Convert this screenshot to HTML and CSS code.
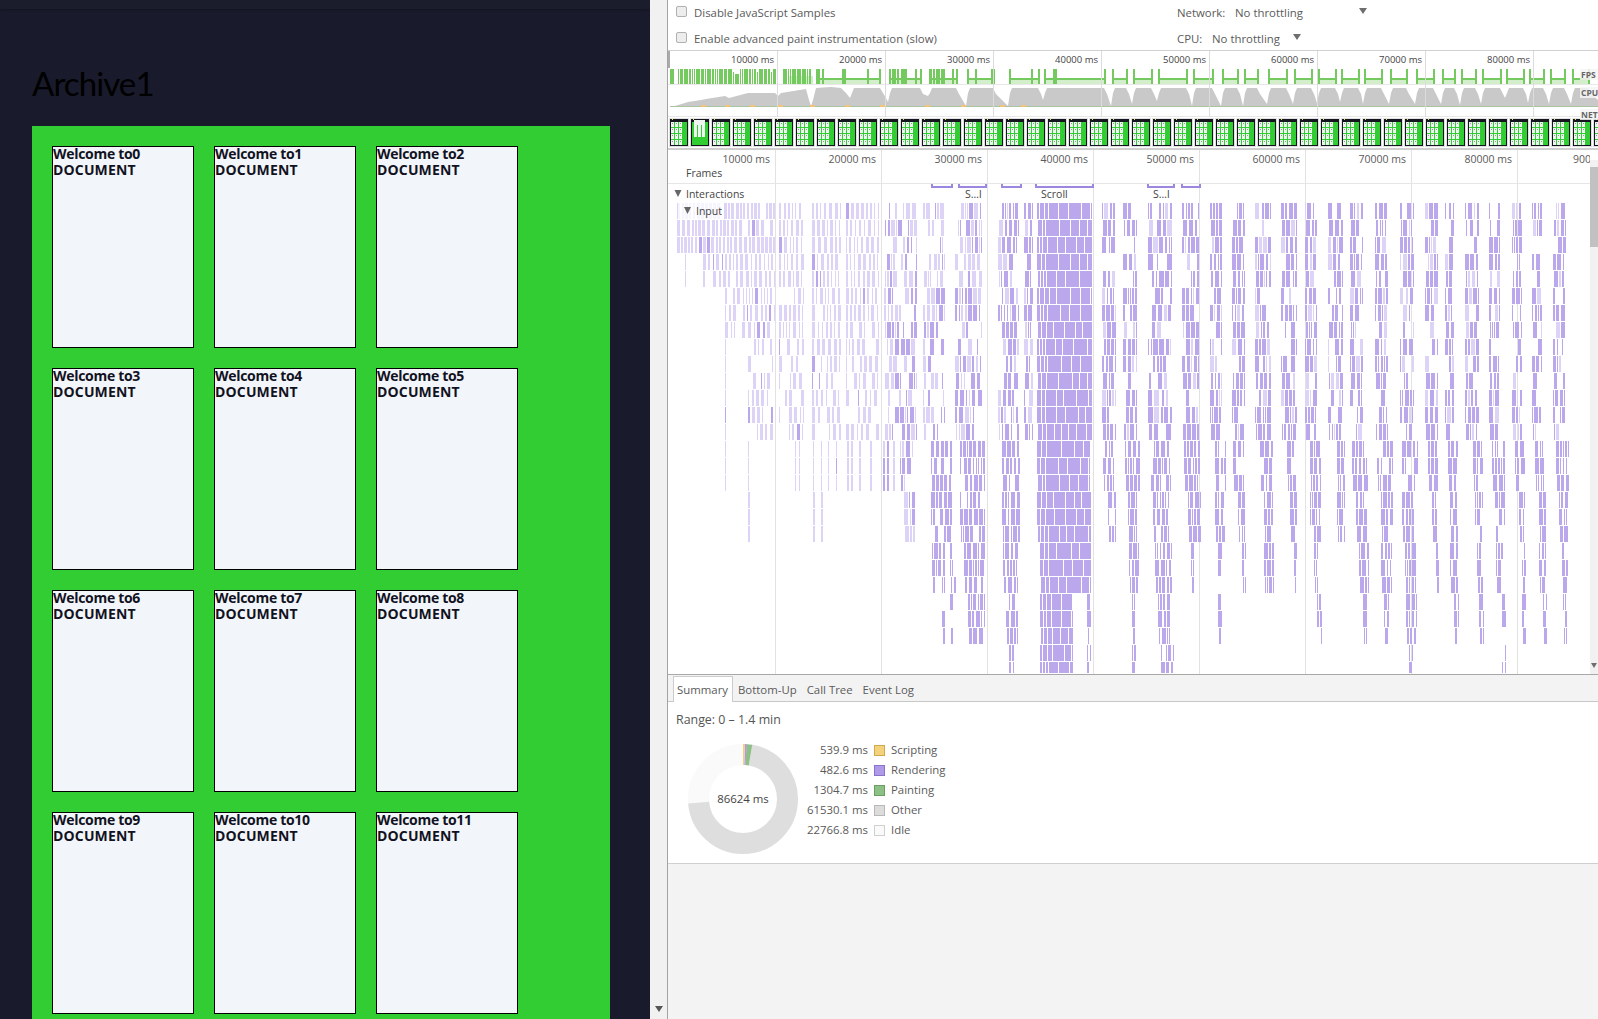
FILE: index.html
```html
<!DOCTYPE html>
<html lang="en">
<head>
<meta charset="utf-8">
<title>Archive1 – Performance</title>
<link rel="stylesheet" href="styles.css">
</head>
<body>
<div class="screen">
  <main class="page">
    <div class="topbar"></div>
    <h1 class="title">Archive1</h1>
    <section class="panel">
      <article class="card"><b>Welcome to0</b><b>DOCUMENT</b></article>
      <article class="card"><b>Welcome to1</b><b>DOCUMENT</b></article>
      <article class="card"><b>Welcome to2</b><b>DOCUMENT</b></article>
      <article class="card"><b>Welcome to3</b><b>DOCUMENT</b></article>
      <article class="card"><b>Welcome to4</b><b>DOCUMENT</b></article>
      <article class="card"><b>Welcome to5</b><b>DOCUMENT</b></article>
      <article class="card"><b>Welcome to6</b><b>DOCUMENT</b></article>
      <article class="card"><b>Welcome to7</b><b>DOCUMENT</b></article>
      <article class="card"><b>Welcome to8</b><b>DOCUMENT</b></article>
      <article class="card"><b>Welcome to9</b><b>DOCUMENT</b></article>
      <article class="card"><b>Welcome to10</b><b>DOCUMENT</b></article>
      <article class="card"><b>Welcome to11</b><b>DOCUMENT</b></article>
    </section>
  </main>
  <div class="page-scrollbar"><span class="tri tri-dark"></span></div>
  <section class="devtools">
    <header class="toolbar">
      <div class="tool-row">
        <label class="check-label"><span class="checkbox"></span>Disable JavaScript Samples</label>
        <div class="throttle"><span class="throttle-name net-name">Network:</span><span class="net-value">No throttling</span><span class="tri"></span></div>
      </div>
      <div class="tool-row">
        <label class="check-label"><span class="checkbox"></span>Enable advanced paint instrumentation (slow)</label>
        <div class="throttle"><span class="throttle-name cpu-name">CPU:</span><span class="cpu-value">No throttling</span><span class="tri"></span></div>
      </div>
    </header>
    <svg id="overview" class="overview" viewBox="668 51 930 99" width="930" height="99" xmlns="http://www.w3.org/2000/svg"></svg>
    <div class="main-chart">
      <svg id="flame" class="flame" viewBox="668 150 922 524" width="922" height="524" xmlns="http://www.w3.org/2000/svg"></svg>
      <div class="chart-scrollbar"><div class="chart-thumb"></div><span class="tri tri-small"></span></div>
    </div>
    <nav class="tabs">
      <span class="tab tab-active">Summary</span>
      <span class="tab">Bottom-Up</span>
      <span class="tab">Call Tree</span>
      <span class="tab">Event Log</span>
    </nav>
    <section class="summary">
      <div class="range">Range: 0 – 1.4 min</div>
      <div class="summary-body">
        <div class="pie">
          <svg viewBox="0 0 110 110" width="110" height="110" xmlns="http://www.w3.org/2000/svg">
            <g class="pie-ring" fill="none" stroke-width="21">
              <circle class="pie-idle" cx="55" cy="55" r="44.5"/>
              <circle class="pie-other" cx="55" cy="55" r="44.5" pathLength="100" stroke-dasharray="71 100" stroke-dashoffset="-2.7"/>
              <circle class="pie-paint" cx="55" cy="55" r="44.5" pathLength="100" stroke-dasharray="1.6 100" stroke-dashoffset="-1.1"/>
              <circle class="pie-render" cx="55" cy="55" r="44.5" pathLength="100" stroke-dasharray="0.6 100" stroke-dashoffset="-0.6"/>
              <circle class="pie-script" cx="55" cy="55" r="44.5" pathLength="100" stroke-dasharray="0.6 100"/>
            </g>
          </svg>
          <span class="pie-total">86624 ms</span>
        </div>
        <ul class="legend">
          <li><span class="legend-value">539.9 ms</span><span class="swatch sw-script"></span>Scripting</li>
          <li><span class="legend-value">482.6 ms</span><span class="swatch sw-render"></span>Rendering</li>
          <li><span class="legend-value">1304.7 ms</span><span class="swatch sw-paint"></span>Painting</li>
          <li><span class="legend-value">61530.1 ms</span><span class="swatch sw-other"></span>Other</li>
          <li><span class="legend-value">22766.8 ms</span><span class="swatch sw-idle"></span>Idle</li>
        </ul>
      </div>
    </section>
    <div class="devtools-rest"></div>
  </section>
</div>
<script src="app.js"></script>
</body>
</html>
```
FILE: styles.css
```css
* { box-sizing: border-box; }
html, body { margin: 0; height: 100%; overflow: hidden; }
.screen { display: flex; width: 1598px; height: 1019px; overflow: hidden; }

/* page under inspection */
.page { width: 650px; flex: none; height: 1019px; background: #191a2b; overflow: hidden; }
.topbar { height: 9px; background: #1b1c2c; box-shadow: 0 1px 3px rgba(0,0,0,.25); }
.title { margin: 0; padding: 52px 0 0 32px; height: 117px; font: 400 33px/44px Lato, sans-serif; color: #000; letter-spacing: -0.9px; }
.panel { margin-left: 32px; width: 578px; padding: 20px; background: #32cd32; display: grid; grid-template-columns: repeat(3, 142px); grid-auto-rows: 202px; gap: 20px; height: 900px; overflow: hidden; }
.card { background: #f2f6fa; border: 1px solid #000; padding: 0; margin: 0; font: 14px/16px "Open Sans", sans-serif; color: #12121f; }
.card b { display: block; font-weight: 700; margin-top: -1px; margin-bottom: 1px; }
.card b:first-child { letter-spacing: -0.3px; }
.card b:last-child { letter-spacing: 0.15px; }

.page-scrollbar { width: 18px; flex: none; background: #f1f1f1; border-right: 1px solid #a3a3a3; display: flex; align-items: flex-end; justify-content: center; padding: 0 0 7px; }

/* devtools */
.devtools { flex: 1; min-width: 0; display: flex; flex-direction: column; background: #f3f3f3; font: 11.4px/14px "Open Sans", sans-serif; color: #5a5a5a; }
.toolbar { height: 51px; background: #fff; border-bottom: 1px solid #d0d0d0; padding-left: 8px; flex: none; }
.tool-row { height: 25px; display: flex; align-items: center; }
.tool-row + .tool-row { padding-top: 2px; }
.check-label { width: 501px; display: flex; align-items: center; gap: 7px; flex: none; }
.checkbox { width: 11px; height: 11px; border: 1px solid #b0b0b0; border-radius: 2px; background: #ededed; margin-top: -2px; }
.throttle { display: flex; align-items: center; }
.net-name { width: 58px; }
.net-value { width: 124px; }
.cpu-name { width: 35px; }
.cpu-value { width: 81px; }
.tri { display: block; width: 0; height: 0; border-style: solid; border-width: 6px 4px 0; border-color: #6e6e6e transparent transparent; margin-top: -4px; }
.tri-dark { border-color: #555 transparent transparent; margin: 0; }
.tri-small { border-width: 5px 3.5px 0; margin: 0; }

.overview { display: block; flex: none; background: #fff; }
.main-chart { display: flex; height: 525px; flex: none; background: #fff; border-bottom: 1px solid #a8a8a8; border-top: 0; }
.flame { display: block; flex: none; }
.chart-scrollbar { flex: 1; margin-top: 10px; background: #f1f1f1; display: flex; flex-direction: column; align-items: center; justify-content: space-between; padding: 7px 0 6px; }
.chart-thumb { width: 100%; height: 80px; background: #c1c1c1; }
.axis-label { font: 9.5px "Open Sans", sans-serif; fill: #444; text-anchor: end; }
.time-label { font: 10.5px "Open Sans", sans-serif; fill: #5a5a5a; text-anchor: end; }
.track-label { font: 10.5px "Open Sans", sans-serif; fill: #444; }
.side-label { font: 700 8.5px "Open Sans", sans-serif; fill: #666; }

.tabs { height: 27px; flex: none; display: flex; align-items: flex-end; padding-left: 5px; gap: 0; background: #f3f3f3; border-bottom: 1px solid #c8c8c8; }
.tab { height: 25px; padding: 7px 5px 0; }
.tab-active { background: #fff; border: 1px solid #ccc; border-bottom: 0; padding: 6px 3px 0; width: 60px; margin-bottom: -1px; height: 26px; }

.summary { height: 162px; flex: none; background: #fff; border-bottom: 1px solid #cfcfcf; padding: 11px 8px 0; }
.range { font-size: 12.4px; line-height: 14px; color: #555; }
.summary-body { display: flex; margin-top: 17px; }
.pie { position: relative; width: 110px; height: 110px; margin: 0 0 0 12px; flex: none; }
.pie svg { display: block; }
.pie-ring circle { transform: rotate(-90deg); transform-origin: 55px 55px; }
.pie-idle { stroke: #fafafa; }
.pie-other { stroke: #dedede; }
.pie-paint { stroke: #8cc084; }
.pie-render { stroke: #ae9ae8; }
.pie-script { stroke: #f2d27a; }
.pie-total { position: absolute; inset: 0; display: flex; align-items: center; justify-content: center; color: #444; }
.legend { list-style: none; margin: -4px 0 0; padding: 0; width: 200px; }
.legend li { display: flex; align-items: center; height: 20px; white-space: nowrap; }
.legend-value { width: 70px; text-align: right; margin-right: 6px; }
.swatch { width: 11px; height: 11px; margin-right: 6px; border: 1px solid; flex: none; }
.sw-script { background: #f4d27c; border-color: #cfa84f; }
.sw-render { background: #ae9ae8; border-color: #8a74c9; }
.sw-paint { background: #8cc084; border-color: #6a9e62; }
.sw-other { background: #dcdcdc; border-color: #b8b8b8; }
.sw-idle { background: #fafafa; border-color: #d0d0d0; }
.devtools-rest { flex: 1; background: #f3f3f3; }
```
FILE: app.js
```js
(function () {
  var NS = 'http://www.w3.org/2000/svg';
  var seed = 7331;
  function rnd() {
    seed = (seed + 0x6D2B79F5) | 0;
    var t = Math.imul(seed ^ (seed >>> 15), 1 | seed);
    t = (t + Math.imul(t ^ (t >>> 7), 61 | t)) ^ t;
    return ((t ^ (t >>> 14)) >>> 0) / 4294967296;
  }
  function el(parent, name, attrs, text) {
    var n = document.createElementNS(NS, name);
    for (var k in attrs) n.setAttribute(k, attrs[k]);
    if (text) n.textContent = text;
    parent.appendChild(n);
    return n;
  }
  function rectD(x, y, w, h) { return 'M' + x + ' ' + y + 'h' + w + 'v' + h + 'h' + (-w) + 'z'; }

  /* ---------- overview ---------- */
  var ov = document.getElementById('overview');
  var light = '', green = '', line = '';
  var segs = [[816,881],[889,922],[929,958],[967,995],[1009,1040],[1044,1106],[1112,1128],[1133,1153],[1158,1188],[1193,1214],[1222,1239],[1244,1259],[1268,1288],[1294,1313],[1318,1337],[1341,1360],[1364,1383],[1390,1408],[1416,1435],[1442,1456],[1461,1477],[1482,1502],[1506,1525],[1529,1545],[1550,1566],[1572,1590]];
  var x = 670;
  while (x < 812) {
    var w = 1 + Math.floor(rnd() * 4);
    if (x < 678 && x > 671) { x = 678; }
    if (x > 776 && x < 782) { x = 783; }
    var top = rnd() < 0.2 ? 72 + Math.floor(rnd() * 4) : 69;
    green += rectD(x, top, w, 85 - top);
    if (x > 783) light += rectD(x, 76, w + 2, 9);
    x += w + 1;
  }
  segs.forEach(function (s) {
    light += rectD(s[0], 79, s[1] - s[0], 6);
    line += rectD(s[0], 78, s[1] - s[0], 2);
    green += rectD(s[0], 69, 2, 16) + rectD(s[1] - 2, 69, 2, 16);
    var spikes = s[0] < 960 ? 8 : s[0] < 1050 ? 3 : 0;
    for (var i = 0; i < spikes; i++) {
      var px = s[0] + Math.floor(rnd() * (s[1] - s[0]));
      green += rectD(px, 69, 2, 16);
    }
  });
  el(ov, 'rect', { x: 668, y: 51, width: 2, height: 17, fill: '#aaa' });
  el(ov, 'path', { d: light, fill: '#d2eeca', 'shape-rendering': 'crispEdges' });
  el(ov, 'path', { d: line + green, fill: '#74c95f', 'shape-rendering': 'crispEdges' });

  var cpu = 'M675 106L688 102L701 100L706 99L725 96L729 98L748 93L775 93L778 96L781 93L806 89L809 100L811 106L813 100L816 88L831 87L841 88L846 93L850 98L854 88L880 88L886 98L889 104';
  var dips = [102, 96, 106, 106, 100, 106, 104, 101, 106, 106, 106, 104, 104, 103, 102, 104, 104, 104, 104, 105, 104, 98, 103, 104, 104];
  segs.slice(1).forEach(function (s, i) {
    cpu += 'L' + (s[0] - 1) + ' ' + dips[i] + 'L' + (s[0] + 1) + ' 93L' + (s[0] + 3) + ' 88L' + (s[1] - 2) + ' 88L' + (s[1] + 1) + ' 94';
  });
  cpu += 'L1598 100V106H675Z';
  el(ov, 'path', { d: cpu, fill: '#c9c9c9' });
  el(ov, 'rect', { x: 670, y: 106, width: 928, height: 1, fill: '#a9c4a0' });
  [701, 725, 750, 778, 810, 845, 880, 925, 961, 1000, 1021].forEach(function (ox) {
    el(ov, 'rect', { x: ox, y: 105, width: 5, height: 2, fill: '#f3c37a' });
  });
  el(ov, 'rect', { x: 668, y: 84, width: 930, height: 1, fill: '#e8e8e8' });
  el(ov, 'rect', { x: 668, y: 116, width: 930, height: 1, fill: '#e8e8e8' });
  for (var g = 0; g < 8; g++) {
    var gx = 777 + 108 * g;
    el(ov, 'rect', { x: gx, y: 51, width: 1, height: 66, fill: '#dcdcdc' });
    el(ov, 'text', { x: gx - 3, y: 63, class: 'axis-label' }, (g + 1) * 10000 + ' ms');
  }
  /* film strip */
  for (var k = 0; k < 45; k++) {
    var fx = 670 + 21 * k, odd = k === 1;
    el(ov, 'rect', { x: fx - 1, y: 118, width: 20, height: 29, fill: '#e2e2e2' });
    el(ov, 'rect', { x: fx, y: 119, width: 18, height: 27, fill: '#15151f' });
    el(ov, 'rect', { x: fx + 1, y: 122, width: 16, height: 23, fill: '#32cd32' });
    if (odd) {
      [3, 7, 11].forEach(function (c) { el(ov, 'rect', { x: fx + c, y: 120, width: 3, height: 17, fill: '#eef4f0' }); });
      el(ov, 'rect', { x: fx + 3, y: 120, width: 11, height: 5, fill: '#eef4f0' });
    } else {
      [1, 5, 9].forEach(function (c) {
        [122, 128, 134, 140].forEach(function (r) {
          el(ov, 'rect', { x: fx + c, y: r, width: 3, height: 5, fill: '#eef4f0' });
          el(ov, 'rect', { x: fx + c + 1, y: r + 1, width: 1, height: 1, fill: '#999' });
        });
      });
    }
    el(ov, 'rect', { x: fx + 2, y: 119, width: 1, height: 1, fill: '#f5e050' });
  }
  el(ov, 'rect', { x: 668, y: 148, width: 930, height: 2, fill: '#cfcfcf' });

  /* ---------- flame chart ---------- */
  var fl = document.getElementById('flame');
  var T0 = [[677,775],[779,804],[812,841],[846,879],[884,917],[923,945],[955,982],[998,1019],[1024,1033],[1037,1092,13],[1102,1116],[1123,1137],[1148,1172,5],[1182,1199],[1210,1222],[1232,1245],[1255,1271],[1281,1297],[1305,1317],[1328,1343],[1350,1363],[1375,1388],[1400,1414],[1425,1438],[1445,1454],[1465,1479],[1489,1500],[1512,1522],[1532,1542],[1553,1566]];
  var T1 = [[900,913],[931,952],[960,985],[1002,1020],[1037,1090,14],[1103,1114],[1125,1140],[1150,1171],[1184,1200],[1215,1226],[1233,1244],[1260,1274],[1287,1296],[1310,1321],[1337,1345],[1352,1368],[1377,1393],[1402,1418,5],[1428,1438],[1448,1458],[1473,1483],[1492,1505],[1515,1525],[1535,1546],[1556,1569]];
  var T2 = [[904,915],[931,952],[960,985],[1002,1020],[1037,1091,14],[1108,1116],[1128,1137],[1153,1169],[1188,1201],[1215,1225],[1238,1245],[1264,1273],[1290,1297],[1310,1321],[1337,1345],[1356,1367],[1381,1393],[1402,1414],[1432,1438],[1450,1458],[1475,1483],[1495,1506],[1519,1526],[1539,1546],[1559,1568]];
  var T3 = [[932,945],[950,957],[964,985],[1003,1018],[1040,1091,14],[1129,1139],[1155,1172],[1191,1194],[1218,1222],[1242,1246],[1264,1274],[1294,1297],[1314,1318],[1359,1369],[1381,1392],[1405,1416],[1436,1439],[1450,1458],[1477,1483],[1496,1503],[1522,1526],[1539,1546],[1562,1568]];
  var T4 = [[942,945],[950,953],[968,985],[1006,1018],[1040,1073,12],[1087,1091],[1132,1135],[1158,1170],[1218,1222],[1317,1322],[1363,1367],[1384,1389],[1406,1417],[1454,1459],[1479,1484],[1502,1506],[1522,1526],[1543,1547],[1563,1567]];
  var T5 = [[1009,1014],[1040,1073,12],[1087,1091],[1132,1136],[1161,1174],[1409,1413],[1502,1506]];
  var tiers = [[0,13,T0],[14,16,T1],[17,19,T2],[20,22,T3],[23,25,T4],[26,27,T5]];
  var pale = '', dark = '';

  function bar(px, row, w, solid) {
    var y = 203 + 17 * row, h = row === 27 ? 11 : 16;
    var d = rectD(px, y, w, h);
    var p = px < 880 ? 0.05 : px < 1000 ? (row < 5 ? 0.3 : 0.5) : (row < 14 ? 0.82 : 0.95);
    if (row >= 14 && px >= 930) p = 1;
    if (solid || rnd() < p) dark += d; else pale += d;
  }
  function fill(cl, row) {
    var x0 = cl[0], x1 = cl[1], maxW = cl[2] || 4;
    var big = maxW > 6, early = x0 < 776;
    var px = x0 + (row % 3 === 1 && x0 > 880 ? 1 : 0);
    while (px < x1) {
      var w = 1 + Math.floor(rnd() * maxW);
      if (big) {
        /* the big scroll burst: thin bars at its left edge, wide blocks after */
        w = px - x0 < 9 ? 2 + Math.floor(rnd() * 3) : 6 + Math.floor(rnd() * (maxW - 5));
      } else if (early && row < 3) {
        w = 2 + Math.floor(rnd() * 2);
      } else if (px < 880) {
        w = 1 + Math.floor(rnd() * 3);
      }
      if (px + w > x1) w = x1 - px;
      var skip = 0;
      if (px < 880) skip = row < 5 ? 0.03 : row < 8 ? 0.14 : 0.32;
      else if (px < 1000) skip = row < 14 ? 0.3 : 0.1;
      else if (!big && maxW < 6) skip = row < 14 ? 0.18 : 0.08;
      if (rnd() >= skip) bar(px, row, w, big);
      var gap = 1 + (big ? 0 : rnd() < 0.4 ? 1 : 0);
      if (px < 880 && !(early && row < 3)) gap += 1;
      px += w + gap;
    }
  }
  tiers.forEach(function (t) {
    for (var row = t[0]; row <= t[1]; row++) {
      t[2].forEach(function (cl) {
        var a = cl[0];
        if (row >= 3 && row <= 4 && a === 677) { bar(685, row, 1); a = 703; }
        if (row >= 5 && row <= 7 && a === 677) { a = 725; }
        if (row >= 8 && a === 677) { bar(725, row, 1); a = 748; }
        fill([a, cl[1], cl[2]], row);
      });
    }
  });
  /* sparse early bars under the first bursts */
  for (var r1 = 14; r1 <= 16; r1++) {
    [725, 748, 795, 799, 813, 821, 828, 836, 847, 851, 859, 870, 883, 887, 893].forEach(function (bx) { bar(bx, r1, bx > 840 ? 2 : 1); });
  }
  for (var r2 = 17; r2 <= 19; r2++) {
    [748, 813, 821].forEach(function (bx) { bar(bx, r2, 2); });
  }

  for (var n = 0; n < 9; n++) {
    el(fl, 'rect', { x: 775 + 106 * n, y: 150, width: 1, height: 524, fill: '#e2e2e2' });
  }
  el(fl, 'rect', { x: 668, y: 183, width: 922, height: 1, fill: '#e6e6e6' });
  el(fl, 'path', { d: pale, fill: '#dcd3f6', 'shape-rendering': 'crispEdges' });
  el(fl, 'path', { d: dark, fill: '#baa7ec', 'shape-rendering': 'crispEdges' });
  for (var m = 0; m < 8; m++) {
    el(fl, 'text', { x: 770 + 106 * m, y: 163, class: 'time-label' }, (m + 1) * 10000 + ' ms');
  }
  el(fl, 'text', { x: 1591, y: 163, class: 'time-label' }, '900');
  el(fl, 'text', { x: 686, y: 177, class: 'track-label' }, 'Frames');
  el(fl, 'text', { x: 686, y: 198, class: 'track-label' }, 'Interactions');
  el(fl, 'path', { d: 'M674.5 190h7l-3.5 7z', fill: '#666' });
  el(fl, 'rect', { x: 678, y: 203, width: 46, height: 16, fill: '#fff', opacity: 0.75 });
  el(fl, 'path', { d: 'M684 207h7l-3.5 7z', fill: '#666' });
  el(fl, 'text', { x: 696, y: 215, class: 'track-label' }, 'Input');
  [[932,952],[959,986],[1002,1021],[1036,1093],[1148,1174],[1182,1200]].forEach(function (b) {
    el(fl, 'path', { d: 'M' + b[0] + ' 184V187H' + b[1] + 'V184', fill: 'none', stroke: '#9c87e0', 'stroke-width': 2 });
  });
  el(fl, 'text', { x: 965, y: 198, class: 'track-label' }, 'S…l');
  el(fl, 'text', { x: 1041, y: 198, class: 'track-label' }, 'Scroll');
  el(fl, 'text', { x: 1153, y: 198, class: 'track-label' }, 'S…l');

  [[1581, 78, 'FPS'], [1581, 96, 'CPU'], [1581, 118, 'NET']].forEach(function (f) {
    el(ov, 'rect', { x: f[0] - 1, y: f[1] - 9, width: 18, height: 11, fill: '#f4f4f4', opacity: 0.85 });
    el(ov, 'text', { x: f[0], y: f[1], class: 'side-label' }, f[2]);
  });
})();
```
